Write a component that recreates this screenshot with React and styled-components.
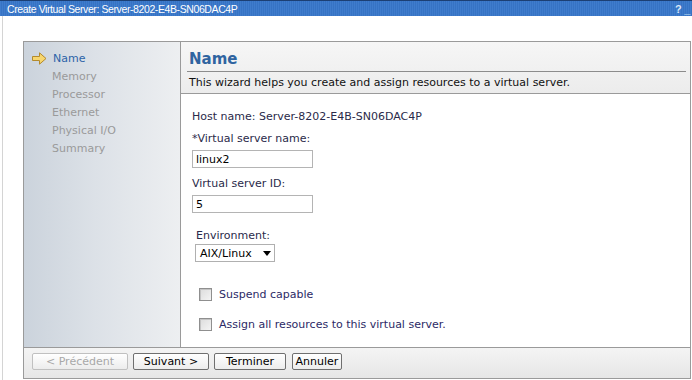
import React from "react";
import styled, { createGlobalStyle } from "styled-components";

const Global = createGlobalStyle`
  html, body { margin: 0; padding: 0; background: #fff; }
  body { font-family: "DejaVu Sans", Verdana, sans-serif; font-size: 11px; color: #2a2a4a; }
  * { box-sizing: border-box; }
`;

const Window = styled.div`
  width: 692px;
  height: 380px;
  display: flex;
  flex-direction: column;
  overflow: hidden;
`;

const TitleBar = styled.div`
  height: 16px;
  flex: none;
  display: flex;
  align-items: center;
  justify-content: space-between;
  padding: 0 2px 0 7px;
  background: repeating-linear-gradient(90deg, #3f7ccc 0 1px, #3673c4 1px 2px);
  border-top: 1px solid #1c3f73;
  color: #fff;
  font-family: "Liberation Sans", Arial, sans-serif;
  font-size: 10.5px;
  letter-spacing: -0.4px;
`;

const TitleControls = styled.div`
  display: flex;
  align-items: center;
  gap: 3px;
  font-weight: bold;
  font-size: 11px;
  color: #dce8f8;
`;

const Body = styled.div`
  flex: 1;
  margin-left: 2px;
  border-left: 1px solid #d4d4d4;
  padding: 25px 1px 0 20px;
`;

const Panel = styled.div`
  width: 668px;
  height: 338px;
  border: 1px solid #9a9a9a;
  display: flex;
  flex-direction: column;
`;

const Main = styled.div`
  flex: 1;
  display: flex;
  min-height: 0;
`;

const Nav = styled.div`
  width: 157px;
  flex: none;
  border-right: 1px solid #9a9a9a;
  background: linear-gradient(90deg, #cbd3dc 0%, #dce1e7 45%, #edeff1 100%);
  padding: 7px 0 0 8px;
  display: flex;
  flex-direction: column;
`;

const NavItem = styled.div`
  height: 18px;
  display: flex;
  align-items: center;
  gap: 6px;
  padding-left: ${(p) => (p.$active ? 0 : 20)}px;
  color: ${(p) => (p.$active ? "#2d63a8" : "#9a9a9a")};
`;

const Content = styled.div`
  flex: 1;
  display: flex;
  flex-direction: column;
  background: #fff;
`;

const Header = styled.div`
  height: 52px;
  flex: none;
  border-bottom: 1px solid #9a9a9a;
  background: linear-gradient(180deg, #f6f6f6 0%, #ececec 100%);
  padding: 0 4px 0 6px;
`;

const HeaderTitle = styled.div`
  height: 30px;
  border-bottom: 1px solid #8c8c8c;
  display: flex;
  align-items: center;
  padding-left: 2px;
  padding-top: 5px;
  font-size: 15px;
  font-weight: bold;
  color: #2f64a0;
`;

const HeaderDesc = styled.div`
  height: 20px;
  display: flex;
  align-items: center;
  padding-left: 2px;
  color: #111;
`;

const Form = styled.div`
  flex: 1;
  padding: 16px 0 0 11px;
  display: flex;
  flex-direction: column;
`;

const Label = styled.div`
  height: 14px;
  line-height: 14px;
  margin-left: ${(p) => p.$indent || 0}px;
  margin-top: ${(p) => p.$mt || 0}px;
`;

const TextInput = styled.div`
  width: 121px;
  height: 18px;
  border: 1px solid #b4b4b4;
  margin-top: 4px;
  padding-left: 3px;
  display: flex;
  align-items: center;
  color: #000;
`;

const Select = styled.div`
  width: 80px;
  height: 18px;
  margin-top: 1px;
  margin-left: 3px;
  border: 1px solid #b0b0b0;
  display: flex;
  align-items: center;
  justify-content: space-between;
  padding: 0 3px 0 4px;
  color: #000;
`;

const Caret = styled.span`
  width: 0;
  height: 0;
  border-left: 4px solid transparent;
  border-right: 4px solid transparent;
  border-top: 5px solid #000;
`;

const CheckRow = styled.div`
  display: flex;
  align-items: center;
  gap: 7px;
  margin-left: 7px;
  margin-top: ${(p) => p.$mt}px;
  height: 14px;
  color: #2c2a66;
`;

const Box = styled.span`
  width: 13px;
  height: 13px;
  border: 1px solid #8f8f8f;
  background: linear-gradient(135deg, #dcdcdc 0%, #f4f4f4 100%);
  box-shadow: inset 1px 1px 0 #c4c4c4;
`;

const Footer = styled.div`
  height: 31px;
  flex: none;
  border-top: 1px solid #9a9a9a;
  background: linear-gradient(180deg, #f4f4f4 0%, #e6e6e6 100%);
  display: flex;
  align-items: flex-start;
  padding: 5px 0 0 8px;
  gap: 5px;
`;

const Button = styled.div`
  width: ${(p) => p.$w}px;
  height: 17px;
  margin-left: ${(p) => p.$ml || 0}px;
  border: 1px solid ${(p) => (p.$disabled ? "#c0c0c0" : "#6f6f6f")};
  border-radius: 2px;
  background: linear-gradient(180deg, #ffffff 0%, #ececec 100%);
  color: ${(p) => (p.$disabled ? "#a8a8a8" : "#000")};
  display: flex;
  align-items: center;
  justify-content: center;
`;

const Arrow = () => (
  <svg width="15" height="13" viewBox="0 0 15 13">
    <path
      d="M0.5 4.5 H7.5 V0.8 L14 6.5 L7.5 12.2 V8.5 H0.5 Z"
      fill="#f7d66e"
      stroke="#b38a2c"
      strokeWidth="1"
      strokeLinejoin="round"
    />
  </svg>
);

const steps = ["Memory", "Processor", "Ethernet", "Physical I/O", "Summary"];

export default function App() {
  return (
    <>
      <Global />
      <Window>
        <TitleBar>
          <span>Create Virtual Server: Server-8202-E4B-SN06DAC4P</span>
          <TitleControls>
            <span>?</span>
            <span>_</span>
          </TitleControls>
        </TitleBar>
        <Body>
          <Panel>
            <Main>
              <Nav>
                <NavItem $active>
                  <Arrow />
                  <span>Name</span>
                </NavItem>
                {steps.map((s) => (
                  <NavItem key={s}>{s}</NavItem>
                ))}
              </Nav>
              <Content>
                <Header>
                  <HeaderTitle>Name</HeaderTitle>
                  <HeaderDesc>This wizard helps you create and assign resources to a virtual server.</HeaderDesc>
                </Header>
                <Form>
                  <Label>Host name: Server-8202-E4B-SN06DAC4P</Label>
                  <Label $mt={8}>*Virtual server name:</Label>
                  <TextInput>linux2</TextInput>
                  <Label $mt={9}>Virtual server ID:</Label>
                  <TextInput>5</TextInput>
                  <Label $mt={16} $indent={4}>Environment:</Label>
                  <Select>
                    <span>AIX/Linux</span>
                    <Caret />
                  </Select>
                  <CheckRow $mt={25}>
                    <Box />
                    <span>Suspend capable</span>
                  </CheckRow>
                  <CheckRow $mt={16}>
                    <Box />
                    <span>Assign all resources to this virtual server.</span>
                  </CheckRow>
                </Form>
              </Content>
            </Main>
            <Footer>
              <Button $w={96} $disabled>&lt; Précédent</Button>
              <Button $w={76}>Suivant &gt;</Button>
              <Button $w={72}>Terminer</Button>
              <Button $w={50} $ml={1}>Annuler</Button>
            </Footer>
          </Panel>
        </Body>
      </Window>
    </>
  );
}
